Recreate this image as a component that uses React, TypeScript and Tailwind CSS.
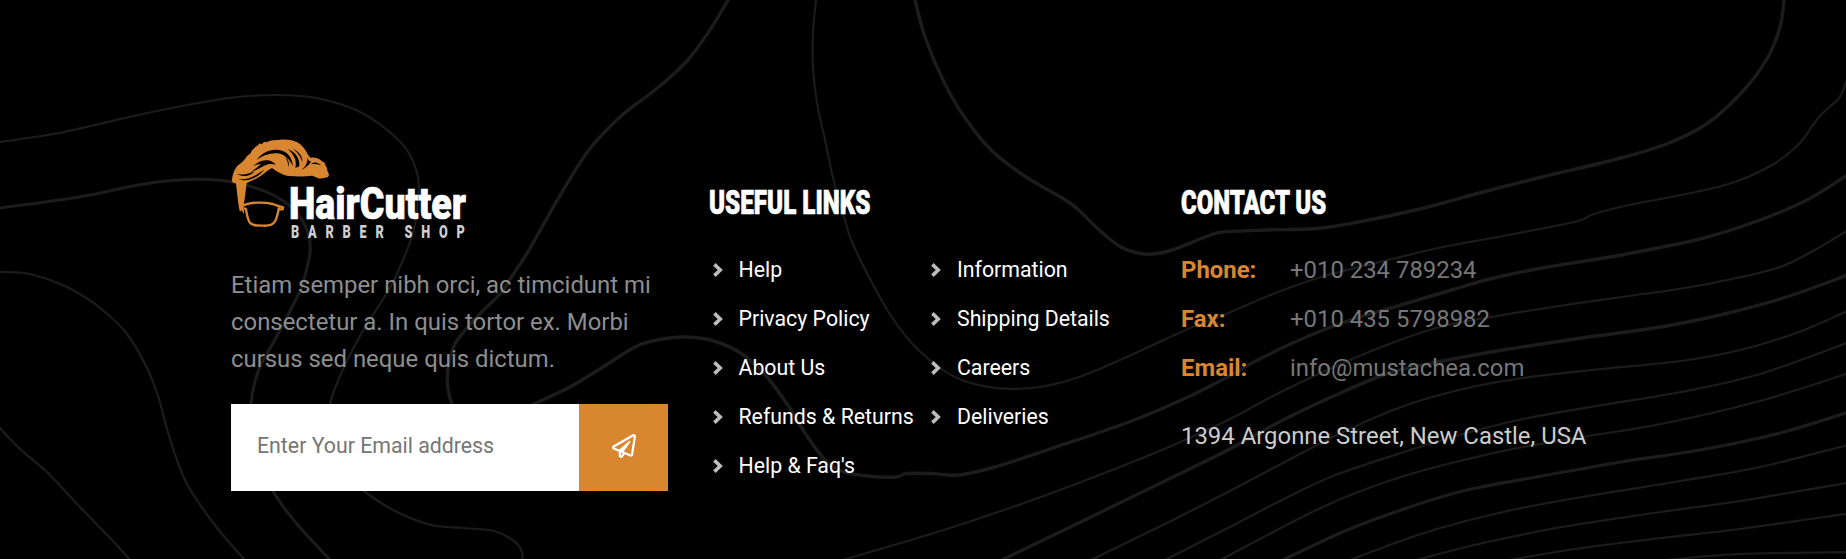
import { FaRegPaperPlane } from "react-icons/fa";

type Point = [number, number];
type Contour = { width: number; points: Point[] };

const contours: Contour[] = [
  { width: 2.2, points: [[-10, 144], [0, 142], [59, 133], [138, 115], [198, 103], [237, 97], [277, 95], [316, 98], [356, 110], [386, 129], [407, 150], [418, 177], [418, 200], [413, 233], [395, 278], [380, 304], [364, 329], [344, 367], [330, 404], [328, 440], [340, 470], [364, 491], [395, 511], [431, 525], [463, 528], [494, 531], [514, 541], [522, 552], [522, 565]] },
  { width: 3, points: [[-10, 209], [0, 208], [79, 197], [138, 185], [178, 180], [217, 180], [249, 186], [277, 197], [297, 213], [308, 233], [310, 253], [304, 279], [300, 291], [277, 336], [259, 369], [251, 404], [253, 445], [273, 491], [297, 524], [332, 562]] },
  { width: 2.2, points: [[-10, 272], [0, 272], [24, 273], [47, 279], [71, 289], [99, 307], [127, 334], [146, 366], [158, 396], [170, 439], [186, 482], [214, 524], [244, 559], [250, 566]] },
  { width: 2.2, points: [[-6, 420], [0, 428], [20, 449], [47, 472], [79, 506], [111, 539], [132, 562]] },
  { width: 3.4, points: [[732, -8], [728, 0], [710, 30], [686, 62], [655, 90], [620, 117], [589, 150], [565, 187], [542, 227], [526, 255], [510, 279], [502, 292], [474, 320], [455, 344], [448, 369], [448, 389], [452, 404], [462, 425], [490, 425], [534, 404], [570, 387], [603, 367], [637, 346], [663, 339], [686, 337], [714, 341], [742, 354], [767, 377], [789, 407], [809, 439], [827, 462], [844, 472], [868, 476], [896, 477], [906, 473.5], [931, 473.5], [959, 475], [995, 467], [1050, 449], [1129, 422], [1188, 397], [1235, 373], [1250, 364], [1297, 341], [1345, 322], [1404, 304], [1455, 289], [1490, 279], [1542, 268], [1621, 255], [1700, 239], [1760, 220], [1807, 200], [1846, 176], [1852, 172]] },
  { width: 2.1, points: [[817, -8], [816, 0], [813, 33], [813, 67], [817, 103], [825, 140], [834, 182], [844, 217], [852, 242], [870, 279], [888, 311], [908, 339], [931, 361], [955, 377], [983, 386], [1014, 389], [1046, 386], [1082, 376], [1129, 356], [1188, 329], [1226, 314], [1273, 294], [1321, 277], [1384, 261], [1443, 247], [1503, 236], [1574, 222], [1594, 214], [1629, 205], [1681, 195], [1732, 183], [1772, 165], [1799, 144], [1819, 117], [1839, 98], [1846, 82], [1850, 72]] },
  { width: 3.4, points: [[913, -8], [915, 0], [925, 37], [943, 80], [963, 115], [991, 150], [1026, 177], [1070, 203], [1097, 228], [1121, 247], [1145, 254], [1169, 251], [1208, 236], [1223, 232], [1266, 230], [1317, 228.5], [1364, 221], [1424, 208], [1483, 192], [1542, 177], [1621, 158], [1669, 143], [1708, 123], [1744, 90], [1768, 57], [1780, 27], [1784, 0], [1784, -8]] },
  { width: 2.2, points: [[830, 565], [846, 559], [931, 534], [1010, 508], [1089, 479], [1169, 447], [1226, 421], [1273, 396], [1325, 371], [1384, 346], [1440, 327], [1503, 315], [1566, 305], [1629, 296], [1685, 288], [1732, 279], [1780, 267], [1811, 252], [1852, 228]] },
  { width: 3.4, points: [[994, 565], [1004, 559], [1089, 518], [1169, 479], [1226, 451], [1285, 419], [1345, 391], [1392, 372], [1443, 361], [1503, 350], [1582, 338], [1661, 327], [1720, 315], [1780, 299], [1837, 279], [1852, 272]] },
  { width: 2.2, points: [[1082, 565], [1093, 559], [1169, 522], [1226, 493], [1285, 462], [1345, 431], [1404, 406], [1463, 389], [1523, 378], [1602, 369], [1681, 361], [1740, 350], [1799, 332], [1852, 309]] },
  { width: 2.2, points: [[1156, 565], [1167, 559], [1226, 529], [1280, 501], [1333, 476], [1404, 452], [1463, 434], [1523, 419], [1602, 405], [1681, 392], [1760, 374], [1852, 341]] },
  { width: 2.2, points: [[1212, 565], [1226, 557], [1325, 506], [1404, 476], [1503, 451], [1582, 437], [1661, 424], [1760, 401], [1852, 372]] },
  { width: 3.2, points: [[1272, 566], [1285, 559], [1345, 531], [1404, 509], [1463, 491], [1542, 476], [1621, 462], [1700, 450], [1780, 433], [1852, 411]] },
  { width: 2.2, points: [[1340, 565], [1353, 559], [1424, 533], [1503, 512], [1582, 497], [1681, 481], [1760, 467], [1852, 444]] },
  { width: 2.2, points: [[1400, 565], [1420, 559], [1483, 543], [1562, 527], [1661, 512], [1740, 501], [1852, 482]] },
  { width: 2.2, points: [[1480, 566], [1515, 559], [1582, 548], [1661, 538], [1740, 529], [1852, 513]] },
  { width: 2.2, points: [[1640, 563], [1677, 559], [1740, 554], [1852, 552]] },
];

function smoothPath(pts: Point[]): string {
  let d = `M${pts[0][0]} ${pts[0][1]}`;
  for (let i = 0; i < pts.length - 1; i++) {
    const p0 = pts[Math.max(i - 1, 0)];
    const p1 = pts[i];
    const p2 = pts[i + 1];
    const p3 = pts[Math.min(i + 2, pts.length - 1)];
    d += `C${p1[0] + (p2[0] - p0[0]) / 6} ${p1[1] + (p2[1] - p0[1]) / 6} ${p2[0] - (p3[0] - p1[0]) / 6} ${p2[1] - (p3[1] - p1[1]) / 6} ${p2[0]} ${p2[1]}`;
  }
  return d;
}

function ContourBackground() {
  return (
    <svg className="absolute inset-0 h-[559px] w-[1846px]" viewBox="0 0 1846 559" fill="none" stroke="#1c1c1c" aria-hidden="true">
      {contours.map((c, i) => (
        <path key={i} d={smoothPath(c.points)} strokeWidth={c.width} />
      ))}
    </svg>
  );
}

function Logo() {
  return (
    <svg className="h-[100px] w-[236px] overflow-visible" viewBox="33 27 708 300" role="img" aria-label="HairCutter Barber Shop">
      <g fill="#d98630">
        <path d="M35 152C38 142 37 132 43 122C48 110 56 104 66 97C74 90 77 82 84 76L92 70C94 60 104 52 114 46L118 40L124 43L134 35L140 37C152 29 166 31 180 29C198 28 216 29 232 37C246 45 256 58 264 74L272 84C284 80 297 86 306 94L314 98L316 106C323 112 320 122 325 128C329 136 326 144 314 143C305 147 294 146 287 141L276 137C250 141 224 139 200 137C182 133 170 124 156 114C140 122 128 136 112 144C100 151 88 154 80 160C77 176 77 190 74 206L71 224L72 252L64 240L60 246C55 228 54 208 51 188L48 160L40 158Z" />
      </g>
      <g fill="#000">
        <path d="M110 89C128 66 152 56 178 60C202 64 216 82 219 108C208 88 198 76 180 71C156 66 132 74 110 89Z" />
        <path d="M100 108C112 96 128 90 144 91C154 92 160 97 168 104C156 101 146 101 136 106C124 112 108 122 92 126C102 120 112 112 122 103C114 103 108 104 100 108Z" />
        <path d="M203 57C226 66 240 84 238 108C234 112 230 112 226 114C231 96 224 74 203 57Z" />
        <path d="M218 56C240 66 248 80 247 96C242 80 234 68 218 56Z" />
        <path d="M261 82C264 96 258 110 244 120C252 116 266 108 274 94C268 96 264 90 261 82Z" />
        <path d="M194 76C204 86 209 98 206 112C204 98 200 86 194 76Z" />
        <path d="M51 131C66 136 84 133 104 124C92 138 70 144 51 131Z" />
        <path d="M54 146C76 152 102 142 134 118C112 146 80 158 54 146Z" />
        <path d="M273 103C281 95 294 96 303 106C293 102 284 101 273 103Z" />
      </g>
      <g fill="none" stroke="#d98630" strokeWidth="7" strokeLinejoin="round">
        <path d="M70 226C92 216 132 216 158 222C168 226 178 229 189 232L188 238L177 238" />
        <path d="M72 234L78 238C81 254 82 266 89 277C97 288 112 287 130 287C146 288 158 285 165 274C172 262 174 248 177 232" />
      </g>
      <g fontFamily="Roboto, sans-serif">
        <text transform="translate(207 267) scale(.79 1)" fontSize="132" fontWeight="900" fill="#fff" stroke="#fff" strokeWidth="2" textLength="672" lengthAdjust="spacingAndGlyphs">HairCutter</text>
        <text transform="translate(213 324) scale(.68 1)" fontSize="56" fontWeight="900" fill="#cfcfcf" textLength="767" lengthAdjust="spacing">BARBER SHOP</text>
      </g>
    </svg>
  );
}

function Chevron() {
  return (
    <svg className="h-[14px] w-[10px] shrink-0" viewBox="0 0 10 14" fill="none" stroke="#bdbdbd" strokeWidth="3.6" aria-hidden="true">
      <path d="M1.4 1.4L7.2 7L1.4 12.6" />
    </svg>
  );
}

function LinkList({ items }: { items: string[] }) {
  return (
    <ul className="text-[21.3px] leading-[49px] whitespace-nowrap text-white">
      {items.map((item) => (
        <li key={item} className="flex items-center gap-[16px]">
          <Chevron />
          <a href="#">{item}</a>
        </li>
      ))}
    </ul>
  );
}

const contacts = [
  ["Phone:", "+010 234 789234"],
  ["Fax:", "+010 435 5798982"],
  ["Email:", "info@mustachea.com"],
];

export default function App() {
  return (
    <footer className="relative h-[559px] w-full overflow-hidden bg-black font-[Roboto,sans-serif]">
      <ContourBackground />
      <div className="relative flex pl-[231px]">
        <section className="w-[437px] pt-[139px]">
          <Logo />
          <p className="mt-[28px] text-[23.9px] leading-[37px] whitespace-nowrap text-[#8e8e8e]">
            Etiam semper nibh orci, ac timcidunt mi
            <br />
            consectetur a. In quis tortor ex. Morbi
            <br />
            cursus sed neque quis dictum.
          </p>
          <form className="mt-[26px] flex h-[87px]">
            <input
              className="w-[348px] bg-white pb-1 pl-[26px] text-[21.3px] outline-none placeholder:text-[#757575]"
              placeholder="Enter Your Email address"
            />
            <button type="button" aria-label="Subscribe" className="flex flex-1 items-center justify-center bg-[#d98630] pb-1 text-2xl text-white">
              <FaRegPaperPlane />
            </button>
          </form>
        </section>

        <section className="ml-[41px] w-[472px] pt-[183px]">
          <h2 className="w-max origin-left scale-x-[.734] text-[33px] leading-10 font-black whitespace-nowrap text-white [-webkit-text-stroke:0.7px_white]">USEFUL LINKS</h2>
          <div className="mt-[22px] grid grid-cols-[218.5px_1fr] pl-[3.5px]">
            <LinkList items={["Help", "Privacy Policy", "About Us", "Refunds & Returns", "Help & Faq's"]} />
            <LinkList items={["Information", "Shipping Details", "Careers", "Deliveries"]} />
          </div>
        </section>

        <section className="pt-[183px]">
          <h2 className="w-max origin-left scale-x-[.726] text-[33px] leading-10 font-black whitespace-nowrap text-white [-webkit-text-stroke:0.7px_white]">CONTACT US</h2>
          <dl className="mt-[23px] grid grid-cols-[109px_1fr] text-[23.9px] leading-[49px]">
            {contacts.map(([label, value]) => (
              <div key={label} className="contents">
                <dt className="font-bold text-[#d98630]">{label}</dt>
                <dd className="text-[#777]">{value}</dd>
              </div>
            ))}
          </dl>
          <p className="mt-[25px] text-[23.9px] leading-9 whitespace-nowrap text-[#ccc]">1394 Argonne Street, New Castle, USA</p>
        </section>
      </div>
    </footer>
  );
}
